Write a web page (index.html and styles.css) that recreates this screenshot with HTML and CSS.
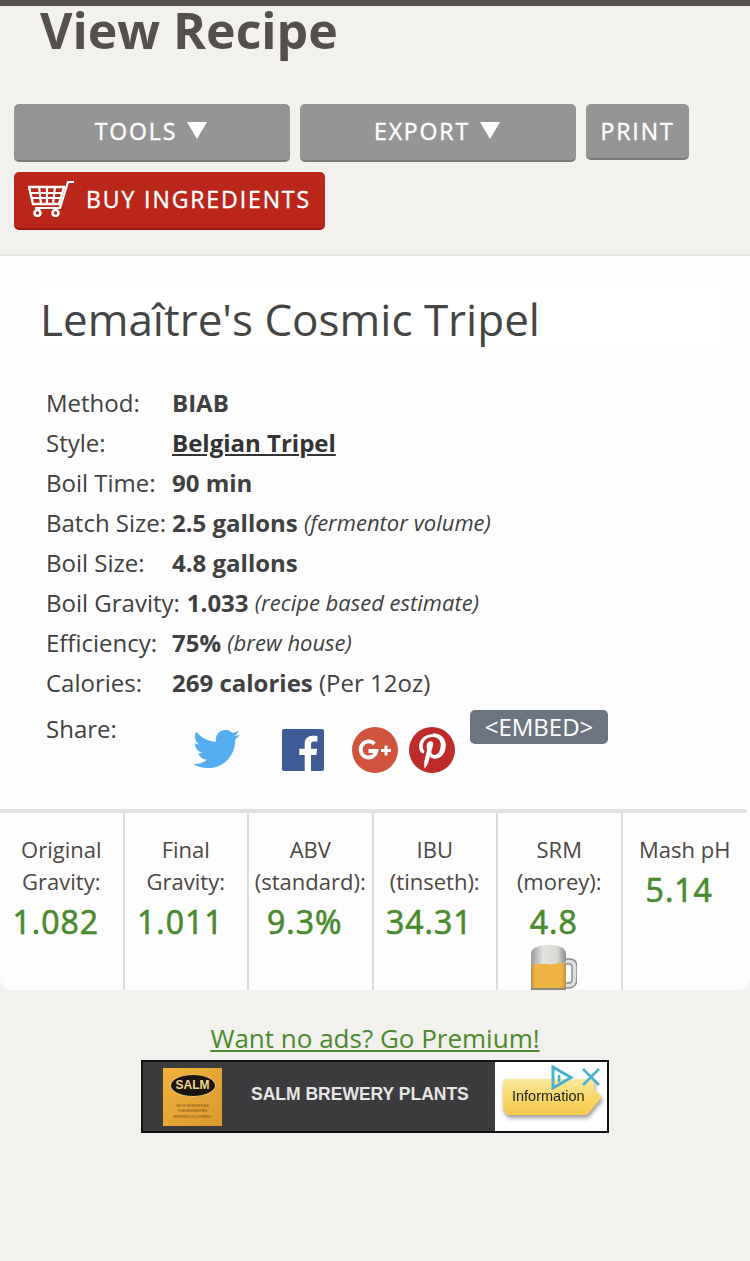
FILE: index.html
```html
<!DOCTYPE html>
<html lang="en">
<head>
<meta charset="utf-8">
<title>View Recipe</title>
<link rel="stylesheet" href="styles.css">
</head>
<body>
<header class="topbar"></header>
<h1 class="page-title">View Recipe</h1>
<nav class="actions">
  <a class="btn btn-wide">TOOLS <span class="tri"></span></a>
  <a class="btn btn-wide">EXPORT <span class="tri"></span></a>
  <a class="btn btn-print">PRINT</a>
  <a class="btn btn-buy">
    <svg class="cart" viewBox="0 0 46 36" width="46" height="36"><g fill="none" stroke="#fff"><path d="M46 1h-6l-8 26H7" stroke-width="2.200"/><path d="M1 6h35l-5 17H5L1 6z" stroke-width="2.400"/><path d="M2 12h32M4 17h28M11 6l2 17M19 6v17M27 6l-2 17" stroke-width="2.200"/></g><circle cx="9.500" cy="32" r="3" fill="none" stroke="#fff" stroke-width="2.600"/><circle cx="27.500" cy="32" r="3" fill="none" stroke="#fff" stroke-width="2.600"/></svg>
    BUY INGREDIENTS</a>
</nav>
<main class="card">
  <section class="info">
    <h2 class="recipe-name">Lemaître's Cosmic Tripel</h2>
    <div class="rows">
      <div class="row"><span class="lab">Method:</span><b>BIAB</b></div>
      <div class="row"><span class="lab">Style:</span><a class="style-link">Belgian Tripel</a></div>
      <div class="row"><span class="lab">Boil Time:</span><b>90 min</b></div>
      <div class="row"><span class="lab">Batch Size:</span><b>2.5 gallons</b>&nbsp;<i class="note">(fermentor volume)</i></div>
      <div class="row"><span class="lab">Boil Size:</span><b>4.8 gallons</b></div>
      <div class="row"><span class="lab lab-auto">Boil Gravity:</span><b>1.033</b>&nbsp;<i class="note">(recipe based estimate)</i></div>
      <div class="row"><span class="lab">Efficiency:</span><b>75%</b>&nbsp;<i class="note">(brew house)</i></div>
      <div class="row"><span class="lab">Calories:</span><b>269 calories</b>&nbsp;(Per 12oz)</div>
    </div>
    <div class="share">
      <span class="share-label">Share:</span>
      <svg class="ic-tw" viewBox="0 2 24 20" width="47" height="40"><path fill="#55acee" d="M23.950 4.570a10 10 0 0 1-2.820.77 4.960 4.960 0 0 0 2.160-2.720c-.95.550-2 .950-3.130 1.180a4.920 4.920 0 0 0-8.380 4.480C7.690 8.100 4.070 6.130 1.640 3.160a4.820 4.820 0 0 0-.66 2.470c0 1.710.87 3.210 2.190 4.100a4.900 4.900 0 0 1-2.230-.61v.06a4.920 4.920 0 0 0 3.950 4.830 4.940 4.940 0 0 1-2.210.08 4.940 4.940 0 0 0 4.600 3.420A9.870 9.870 0 0 1 0 19.540a14 14 0 0 0 7.560 2.210c9.050 0 14-7.500 14-13.980 0-.21 0-.42-.02-.63a9.940 9.940 0 0 0 2.410-2.570z"/></svg>
      <svg class="ic-fb" viewBox="0 0 42 42" width="42" height="42"><rect width="42" height="42" rx="2" fill="#3f5b96"/><path fill="#fff" d="M29 42V26h5.400l.8-6.300H29v-4c0-1.800.5-3.100 3.100-3.100h3.300V7c-.6-.1-2.500-.2-4.700-.2-4.700 0-8 2.900-8 8.100v4.800h-5.400V26h5.400v16H29z"/></svg>
      <svg class="ic-round ic-gp" viewBox="0 0 46 46" width="46" height="46"><circle cx="23" cy="23" r="23" fill="#d0533c"/><path fill="none" stroke="#fff" stroke-width="3.800" d="M22.500 17a8 8 0 1 0 2 7h-8"/><path fill="none" stroke="#fff" stroke-width="3" d="M29 23.500h10M34 18.500v10"/></svg>
      <svg class="ic-round ic-pin" viewBox="0 0 46 46" width="46" height="46"><circle cx="23" cy="23" r="23" fill="#bd2c2a"/><path fill="#fff" transform="translate(-4.500 -3) scale(1.200)" d="M23.700 8.500c-7.700 0-11.600 5.400-11.600 10 0 2.800 1 5.200 3.300 6.100.4.200.7 0 .8-.4l.3-1.300c.1-.4.100-.6-.2-.9-.7-.8-1.100-1.800-1.100-3.300 0-4.200 3.100-7.900 8.100-7.900 4.400 0 6.900 2.700 6.900 6.300 0 4.800-2.100 8.800-5.200 8.800-1.700 0-3-1.400-2.600-3.200.5-2.100 1.500-4.400 1.500-5.900 0-1.400-.7-2.500-2.300-2.500-1.800 0-3.200 1.900-3.200 4.300 0 1.600.5 2.600.5 2.600l-2.200 9.100c-.6 2.700-.1 6-.1 6.400 0 .2.300.3.400.1.200-.2 2.300-2.800 3-5.400.2-.7 1.200-4.600 1.200-4.600.6 1.100 2.300 2.100 4.100 2.100 5.400 0 9.100-4.900 9.100-11.500 0-5-4.200-9.700-10.700-9.700z"/></svg>
      <a class="embed">&lt;EMBED&gt;</a>
    </div>
  </section>
  <section class="stats">
    <div class="stat"><p>Original<br>Gravity:</p><strong>1.082</strong></div>
    <div class="stat"><p>Final<br>Gravity:</p><strong>1.011</strong></div>
    <div class="stat"><p>ABV<br>(standard):</p><strong>9.3%</strong></div>
    <div class="stat"><p>IBU<br>(tinseth):</p><strong>34.31</strong></div>
    <div class="stat"><p>SRM<br>(morey):</p><strong>4.8</strong>
      <svg class="mug" viewBox="0 0 46 48" width="46" height="48"><defs><linearGradient id="foam" x1="0" x2="1" y1="0" y2="0"><stop offset="0" stop-color="#9a9a9a"/><stop offset=".35" stop-color="#e4e4e0"/><stop offset=".75" stop-color="#d8d8d4"/><stop offset="1" stop-color="#8c8c8c"/></linearGradient><linearGradient id="ale" x1="0" x2="1" y1="0" y2="0"><stop offset="0" stop-color="#b98f4a"/><stop offset=".12" stop-color="#efb342"/><stop offset=".88" stop-color="#efb342"/><stop offset="1" stop-color="#b98f4a"/></linearGradient></defs><path d="M33 14h5c5 0 8 3 8 8v12c0 5-3 9-8 9h-5v-5h5c2 0 3-2 3-4V22c0-2-1-3-3-3h-5z" fill="#dedede" stroke="#8e8e8e" stroke-width="1.500"/><path d="M0 18h35v30H0z" fill="url(#ale)"/><path d="M0 9C0 2 9 0 18 0s17 2 17 9v7c-4 4-8 1-12 3-4 1-8 0-11 0-5 0-12 2-12-2z" fill="url(#foam)"/><path d="M0 43h35v5H0z" fill="#8f8a7c"/></svg>
    </div>
    <div class="stat stat-last"><p>Mash pH</p><strong>5.14</strong></div>
  </section>
</main>
<a class="premium">Want no ads? Go Premium!</a>
<aside class="ad">
  <div class="ad-dark">
    <div class="ad-logo"><span class="salm">SALM</span><span class="tiny">MICROBREWERIES<br>PUB BREWERIES<br>BREWING EQUIPMENT</span></div>
    <span class="ad-text">SALM BREWERY PLANTS</span>
  </div>
  <div class="ad-light"><span class="ad-info">Information</span></div>
  <svg class="ad-choices" viewBox="0 0 24 25" width="24" height="25"><path fill="none" stroke="#49b1cf" stroke-width="3" d="M3 2l18 10.500L3 23z"/><path fill="none" stroke="#49b1cf" stroke-width="2.600" d="M9 10v7"/></svg>
  <svg class="ad-close" viewBox="0 0 20 20" width="20" height="20"><path stroke="#49b1cf" stroke-width="2.600" d="M2 2l16 16M18 2L2 18"/></svg>
</aside>
</body>
</html>
```
FILE: styles.css
```css
* { box-sizing: border-box; }
html, body { margin: 0; padding: 0; }
body {
  width: 750px;
  height: 1261px;
  overflow: hidden;
  background: #f2f1ed;
  color: #404040;
  font-family: "Open Sans", "Noto Sans", sans-serif;
  font-size: 24px;
}
.topbar { height: 6px; background: #54504a; }
.page-title {
  margin: 0;
  height: 98px;
  padding-left: 40px;
  color: #54504a;
  font-size: 50px;
  font-weight: 700;
  line-height: 48px;
}
.actions {
  display: flex;
  flex-wrap: wrap;
  gap: 10px;
  padding-left: 14px;
  height: 150px;
  align-content: flex-start;
  align-items: flex-start;
}
.btn {
  display: flex;
  align-items: center;
  justify-content: center;
  gap: 10px;
  height: 58px;
  border-bottom: 2px solid #7b7b7b;
  border-radius: 5px;
  background: #959595;
  color: #fff;
  font-size: 23px;
  font-weight: 400;
  -webkit-text-stroke: 0.4px #fff;
  letter-spacing: 1.9px;
}
.btn-wide { width: 276px; padding: 0 2px 2px 0; }
.btn-print { width: 103px; height: 56px; }
.btn-buy {
  width: 311px;
  background: #bb261b;
  border-bottom-color: #a3160f;
  gap: 12px;
  padding: 0 0 2px;
}
.tri {
  width: 0;
  height: 0;
  margin-top: -2px;
  border-left: 10px solid transparent;
  border-right: 10px solid transparent;
  border-top: 17px solid #fff;
}
.card {
  height: 736px;
  background: #fdfdfd;
  border-top: 2px solid #e4e4e2;
  border-radius: 0 0 12px 12px;
  overflow: hidden;
}
.info { height: 553px; padding: 31px 0 0 40px; }
.recipe-name {
  margin: 0 30px 0 0;
  height: 63px;
  background: #fff;
  color: #444;
  font-size: 44px;
  font-weight: 400;
  line-height: 65px;
}
.rows { margin-top: 32px; padding-left: 6px; }
.row {
  display: flex;
  align-items: center;
  height: 40px;
  white-space: pre;
}
.lab { width: 126px; }
.lab-auto { width: auto; margin-right: 7px; }
.row b, .style-link { font-weight: 700; }
.style-link { color: #333; text-decoration: underline; }
.note { font-size: 22px; }
.share { display: flex; align-items: flex-start; padding: 7px 0 0 6px; height: 90px; }
.share-label { width: 147px; line-height: 40px; }
.ic-tw { margin-top: 20px; }
.ic-fb { margin: 20px 0 0 42px; }
.ic-round { margin: 18px 0 0 28px; }
.ic-pin { margin-left: 11px; }
.embed {
  width: 138px;
  height: 34px;
  margin: 1px 0 0 15px;
  border-radius: 5px;
  background: #6c757f;
  color: #fff;
  font-size: 24px;
  line-height: 33px;
  text-align: center;
}
.stats {
  display: grid;
  grid-template-columns: repeat(6, 124.500px);
  height: 181px;
  border-top: 4px solid #e2e2e0;
  margin-right: 3px;
}
.stat {
  display: flex;
  flex-direction: column;
  align-items: center;
  padding-top: 20px;
  border-right: 2px solid #dcdcdc;
  overflow: hidden;
  color: #4d4743;
}
.stat p { margin: 0; font-size: 22px; line-height: 32px; text-align: center; }
.stat strong {
  margin: 2px 11px 0 0;
  color: #4a8a2e;
  font-size: 32px;
  font-weight: 400;
  -webkit-text-stroke: 0.7px #4a8a2e;
  line-height: 46px;
  letter-spacing: 1px;
}
.stat-last { border-right: 0; }
.mug { flex: none; margin-right: 11px; }
.premium {
  display: block;
  margin-top: 32px;
  color: #4a8a2e;
  font-size: 26px;
  line-height: 32px;
  text-align: center;
  text-decoration: underline;
}
.ad {
  position: relative;
  display: flex;
  width: 468px;
  height: 73px;
  margin: 6px 0 0 141px;
  border: 2px solid #111;
  background: #fff;
}
.ad-dark {
  display: flex;
  align-items: center;
  width: 352px;
  padding-left: 20px;
  background: #3c3c3e;
}
.ad-logo {
  display: flex;
  flex-direction: column;
  align-items: center;
  width: 59px;
  height: 58px;
  padding-top: 6px;
  background: linear-gradient(135deg, #f3b23c, #d99a2c);
}
.salm {
  width: 46px;
  height: 23px;
  border: 1px solid #e8c877;
  border-radius: 50%;
  background: #1a1510;
  color: #f4d58a;
  font: 700 12px/21px "Liberation Sans", sans-serif;
  text-align: center;
}
.tiny {
  margin-top: 7px;
  color: #7a4f12;
  font: 400 3.500px/5.500px "Liberation Sans", sans-serif;
  text-align: center;
}
.ad-text {
  margin: -4px 0 0 29px;
  color: #e6e6e6;
  font: 700 17.500px "Liberation Sans", sans-serif;
}
.ad-light { flex: 1; padding: 17px 0 0 8px; filter: drop-shadow(1px 3px 2px #999); }
.ad-info {
  display: block;
  width: 99px;
  height: 36px;
  padding: 5px 0 0 9px;
  clip-path: polygon(3% 0, 92% 0, 92% 30%, 100% 50%, 85% 100%, 5% 100%, 0 85%, 0 5%);
  background: linear-gradient(#fbe9a2, #f8d766 50%, #f3c94f);
  color: #222;
  font: 400 14.500px/24px "Liberation Sans", sans-serif;
}
.ad-choices { position: absolute; top: 3px; right: 33px; }
.ad-close { position: absolute; top: 5px; right: 6px; }
```
